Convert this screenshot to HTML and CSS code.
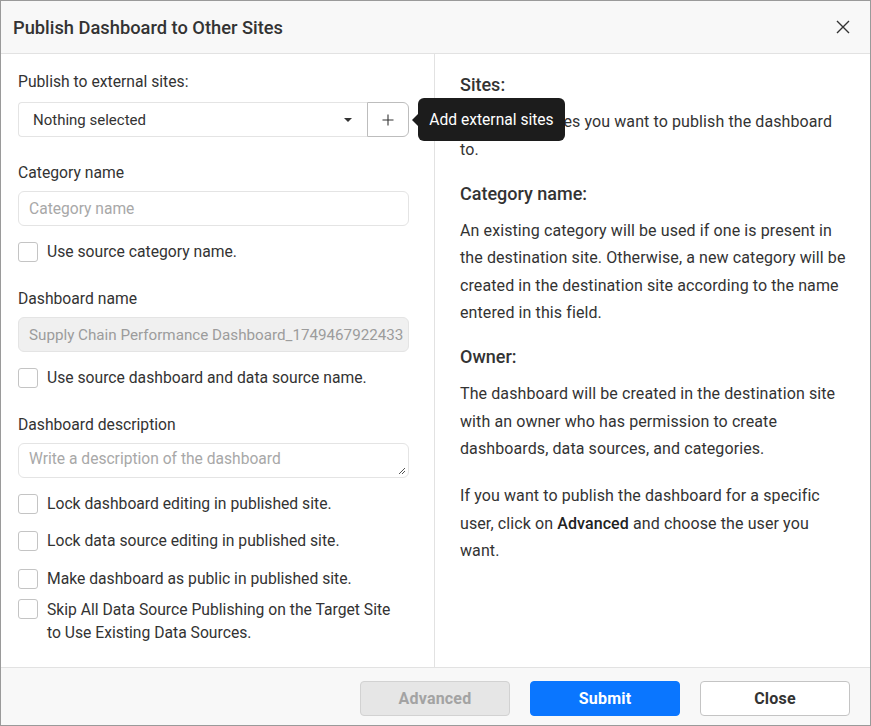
FILE: index.html
```html
<!DOCTYPE html>
<html lang="en">
<head>
<meta charset="utf-8">
<title>Publish Dashboard to Other Sites</title>
<link rel="stylesheet" href="styles.css">
</head>
<body>
<div class="dialog">
  <div class="header">
    <div class="title">Publish Dashboard to Other Sites</div>
    <button class="close-x" aria-label="Close">
      <svg width="14" height="14" viewBox="0 0 14 14"><path d="M1 1L13 13M13 1L1 13" stroke="#333" stroke-width="1.4" fill="none"/></svg>
    </button>
  </div>
  <div class="body">
    <div class="left">
      <div class="label l-first">Publish to external sites:</div>
      <div class="select-row">
        <div class="select">
          <span>Nothing selected</span>
          <span class="caret"></span>
        </div>
        <button class="add-btn">
          <svg width="12" height="12" viewBox="0 0 12 12"><path d="M6 0.5V11.5M0.5 6H11.5" stroke="#333" stroke-width="1.1"/></svg>
        </button>
        <div class="tooltip">Add external sites</div>
      </div>

      <div class="label l-gap l-after-select">Category name</div>
      <div class="input placeholder">Category name</div>
      <label class="check c-first"><span class="box"></span><span>Use source category name.</span></label>

      <div class="label l-gap">Dashboard name</div>
      <div class="input disabled">Supply Chain Performance Dashboard_1749467922433</div>
      <label class="check c-first"><span class="box"></span><span>Use source dashboard and data source name.</span></label>

      <div class="label l-gap">Dashboard description</div>
      <div class="input textarea placeholder">Write a description of the dashboard
        <svg class="grip" width="9" height="9" viewBox="0 0 9 9"><path d="M8 2L2 8M8 5L5 8" stroke="#555" stroke-width="1"/></svg>
      </div>
      <label class="check c-first"><span class="box"></span><span>Lock dashboard editing in published site.</span></label>
      <label class="check c-2"><span class="box"></span><span>Lock data source editing in published site.</span></label>
      <label class="check c-3"><span class="box"></span><span>Make dashboard as public in published site.</span></label>
      <label class="check c-4 multi"><span class="box"></span><span class="multi-text">Skip All Data Source Publishing on the Target Site to Use Existing Data Sources.</span></label>
    </div>
    <div class="right">
      <h3 class="h-first">Sites:</h3>
      <p>Choose the sites you want to publish the dashboard to.</p>
      <h3>Category name:</h3>
      <p>An existing category will be used if one is present in the destination site. Otherwise, a new category will be created in the destination site according to the name entered in this field.</p>
      <h3>Owner:</h3>
      <p>The dashboard will be created in the destination site with an owner who has permission to create dashboards, data sources, and categories.</p>
      <p class="p-gap">If you want to publish the dashboard for a specific user, click on <b>Advanced</b> and choose the user you want.</p>
    </div>
  </div>
  <div class="footer">
    <button class="btn btn-disabled">Advanced</button>
    <button class="btn btn-primary">Submit</button>
    <button class="btn btn-default">Close</button>
  </div>
</div>
</body>
</html>
```
FILE: styles.css
```css
* { box-sizing: border-box; }
html, body { margin: 0; padding: 0; }
body {
  font-family: Roboto, "Liberation Sans", sans-serif;
  color: #333;
  background: #fff;
}
.dialog {
  width: 871px;
  height: 726px;
  border: 1px solid #9a9a9a;
  display: flex;
  flex-direction: column;
  background: #fff;
}
.header {
  height: 53px;
  flex: none;
  background: #f8f8f8;
  border-bottom: 1px solid #e2e2e2;
  display: flex;
  align-items: center;
  justify-content: space-between;
  padding: 0 20px 0 12px;
}
.title {
  font-size: 18.3px;
  font-weight: 500;
  color: #333;
}
.close-x {
  border: 0;
  background: none;
  padding: 0;
  width: 14px;
  height: 14px;
  display: flex;
}
.body {
  flex: 1;
  display: flex;
  min-height: 0;
}
.left {
  width: 434px;
  flex: none;
  border-right: 1px solid #e2e2e2;
  padding: 0 25px 0 17px;
  display: flex;
  flex-direction: column;
}
.label {
  font-size: 15.7px;
  line-height: 20px;
  color: #333;
}
.l-first { margin-top: 18px; }
.l-gap { margin-top: 27px; margin-bottom: 8px; }
.l-gap.l-after-select { margin-top: 26px; }
.select-row {
  margin-top: 10px;
  display: flex;
  position: relative;
  height: 35px;
}
.select {
  flex: 1;
  border: 1px solid #e4e4e4;
  border-right: 0;
  border-radius: 4px 0 0 4px;
  display: flex;
  align-items: center;
  justify-content: space-between;
  padding: 0 15px 0 14px;
  font-size: 15px;
  color: #333;
}
.caret {
  width: 0;
  height: 0;
  border-left: 4px solid transparent;
  border-right: 4px solid transparent;
  border-top: 4px solid #333;
}
.add-btn {
  width: 42px;
  flex: none;
  border: 1px solid #bdbdbd;
  border-radius: 0 6px 6px 0;
  background: #fff;
  display: flex;
  align-items: center;
  justify-content: center;
  padding: 0;
}
.tooltip {
  position: absolute;
  left: 400px;
  top: -4px;
  height: 43px;
  width: 147px;
  background: #1c1c1c;
  color: #fff;
  border-radius: 6px;
  font-size: 15.6px;
  display: flex;
  align-items: center;
  justify-content: center;
  z-index: 5;
  white-space: nowrap;
}
.tooltip::before {
  content: "";
  position: absolute;
  left: -6px;
  top: 50%;
  margin-top: -6px;
  border-top: 6px solid transparent;
  border-bottom: 6px solid transparent;
  border-right: 6px solid #1c1c1c;
}
.input {
  height: 35px;
  border: 1px solid #e4e4e4;
  border-radius: 6px;
  font-size: 15.6px;
  display: flex;
  align-items: center;
  padding: 0 10px;
  white-space: nowrap;
  overflow: hidden;
}
.placeholder { color: #a8a8a8; }
.disabled {
  background: #f0f0f0;
  color: #9c9c9c;
  border-color: #e4e4e4;
  font-size: 15.2px;
}
.textarea {
  position: relative;
  align-items: flex-start;
  padding-top: 6px;
}
.grip {
  position: absolute;
  right: 2px;
  bottom: 2px;
}
.check {
  display: flex;
  align-items: center;
  gap: 9px;
  font-size: 15.7px;
  line-height: 20px;
  color: #333;
}
.box {
  width: 20px;
  height: 20px;
  flex: none;
  border: 1px solid #c4c4c4;
  border-radius: 3px;
  background: #fff;
}
.c-first { margin-top: 16px; }
.c-2 { margin-top: 17px; }
.c-3 { margin-top: 18px; }
.c-4 { margin-top: 9px; }
.multi {
  align-items: flex-start;
  line-height: 23px;
}
.multi .box { margin-top: 1px; }
.multi-text { padding-right: 13px; }
.right {
  flex: 1;
  padding: 0 20px 0 25px;
}
.right h3 {
  margin: 18.5px 0 0;
  font-size: 18px;
  font-weight: 500;
  line-height: 24px;
  color: #333;
}
.right h3.h-first { margin-top: 19px; }
.right p {
  margin: 11px 0 0;
  font-size: 16px;
  letter-spacing: 0.1px;
  line-height: 27.5px;
  color: #333;
}
.right p.p-gap { margin-top: 19.5px; }
.right b { font-weight: 500; color: #222; }
.footer {
  height: 58px;
  flex: none;
  background: #f8f8f8;
  border-top: 1px solid #e2e2e2;
  display: flex;
  justify-content: flex-end;
  align-items: flex-start;
  gap: 20px;
  padding: 13px 20px 0 0;
}
.btn {
  width: 150px;
  height: 35px;
  border-radius: 4px;
  font-family: Roboto, "Liberation Sans", sans-serif;
  font-size: 16px;
  font-weight: 700;
  letter-spacing: 0.2px;
}
.btn-disabled {
  background: #e6e6e6;
  border: 1px solid #d2d2d2;
  color: #a3a3a3;
}
.btn-primary {
  background: #0a76ff;
  border: 1px solid #0a76ff;
  color: #fff;
}
.btn-default {
  background: #fff;
  border: 1px solid #c4c4c4;
  color: #333;
}
```
